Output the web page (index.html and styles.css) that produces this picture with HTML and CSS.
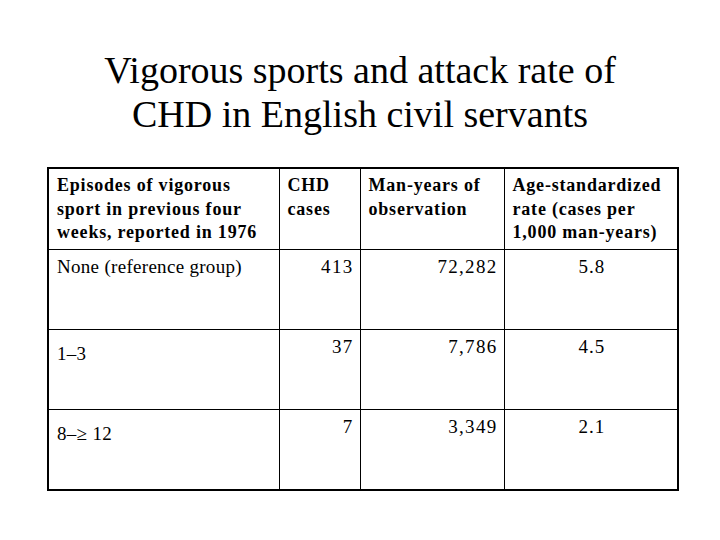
FILE: index.html
```html
<!DOCTYPE html>
<html>
<head>
<meta charset="utf-8">
<link rel="stylesheet" href="styles.css">
</head>
<body>
<div class="slide">
  <h1 class="title">Vigorous sports and attack rate of<br>CHD in English civil servants</h1>
  <table class="data">
    <colgroup>
      <col class="c1"><col class="c2"><col class="c3"><col class="c4">
    </colgroup>
    <thead>
      <tr class="hrow">
        <th>Episodes of vigorous sport in previous four weeks, reported in 1976</th>
        <th>CHD cases</th>
        <th>Man-years of observation</th>
        <th>Age-standardized rate (cases per 1,000 man-years)</th>
      </tr>
    </thead>
    <tbody>
      <tr class="drow">
        <td class="lab">None (reference group)</td>
        <td class="num">413</td>
        <td class="num">72,282</td>
        <td class="mid">5.8</td>
      </tr>
      <tr class="drow">
        <td class="lab low">1–3</td>
        <td class="num">37</td>
        <td class="num">7,786</td>
        <td class="mid">4.5</td>
      </tr>
      <tr class="drow last">
        <td class="lab low">8–≥ 12</td>
        <td class="num">7</td>
        <td class="num">3,349</td>
        <td class="mid">2.1</td>
      </tr>
    </tbody>
  </table>
</div>
</body>
</html>
```

FILE: styles.css
```css
html, body {
  margin: 0;
  padding: 0;
  background: #ffffff;
}
.slide {
  width: 720px;
  height: 540px;
  font-family: "Liberation Serif", "Times New Roman", serif;
  color: #000;
  padding-top: 48px;
  box-sizing: border-box;
}
.title {
  margin: 0;
  font-weight: normal;
  font-size: 38px;
  line-height: 44px;
  text-align: center;
}
.data {
  margin: 31px 0 0 47px;
  border-collapse: collapse;
  border: 2px solid #000;
  table-layout: fixed;
  width: 632px;
}
.c1 { width: 231px; }
.c2 { width: 81px; }
.c3 { width: 144px; }
.c4 { width: 174px; }
.hrow { height: 81px; }
.drow { height: 80px; }
.drow.last { height: 81px; }
.data th, .data td {
  border: 1px solid #000;
  vertical-align: top;
  padding: 5px 6px 0 8px;
}
.data th {
  text-align: left;
  font-weight: bold;
  font-size: 18px;
  line-height: 23.5px;
  letter-spacing: 0.8px;
}
.data td {
  padding-top: 6px;
  font-size: 19px;
  line-height: 22px;
  letter-spacing: 0.3px;
}
.data td.num {
  text-align: right;
  letter-spacing: 1.3px;
}
.data td.mid {
  text-align: center;
  letter-spacing: 1px;
}
.data td.low { padding-top: 13px; }
```
